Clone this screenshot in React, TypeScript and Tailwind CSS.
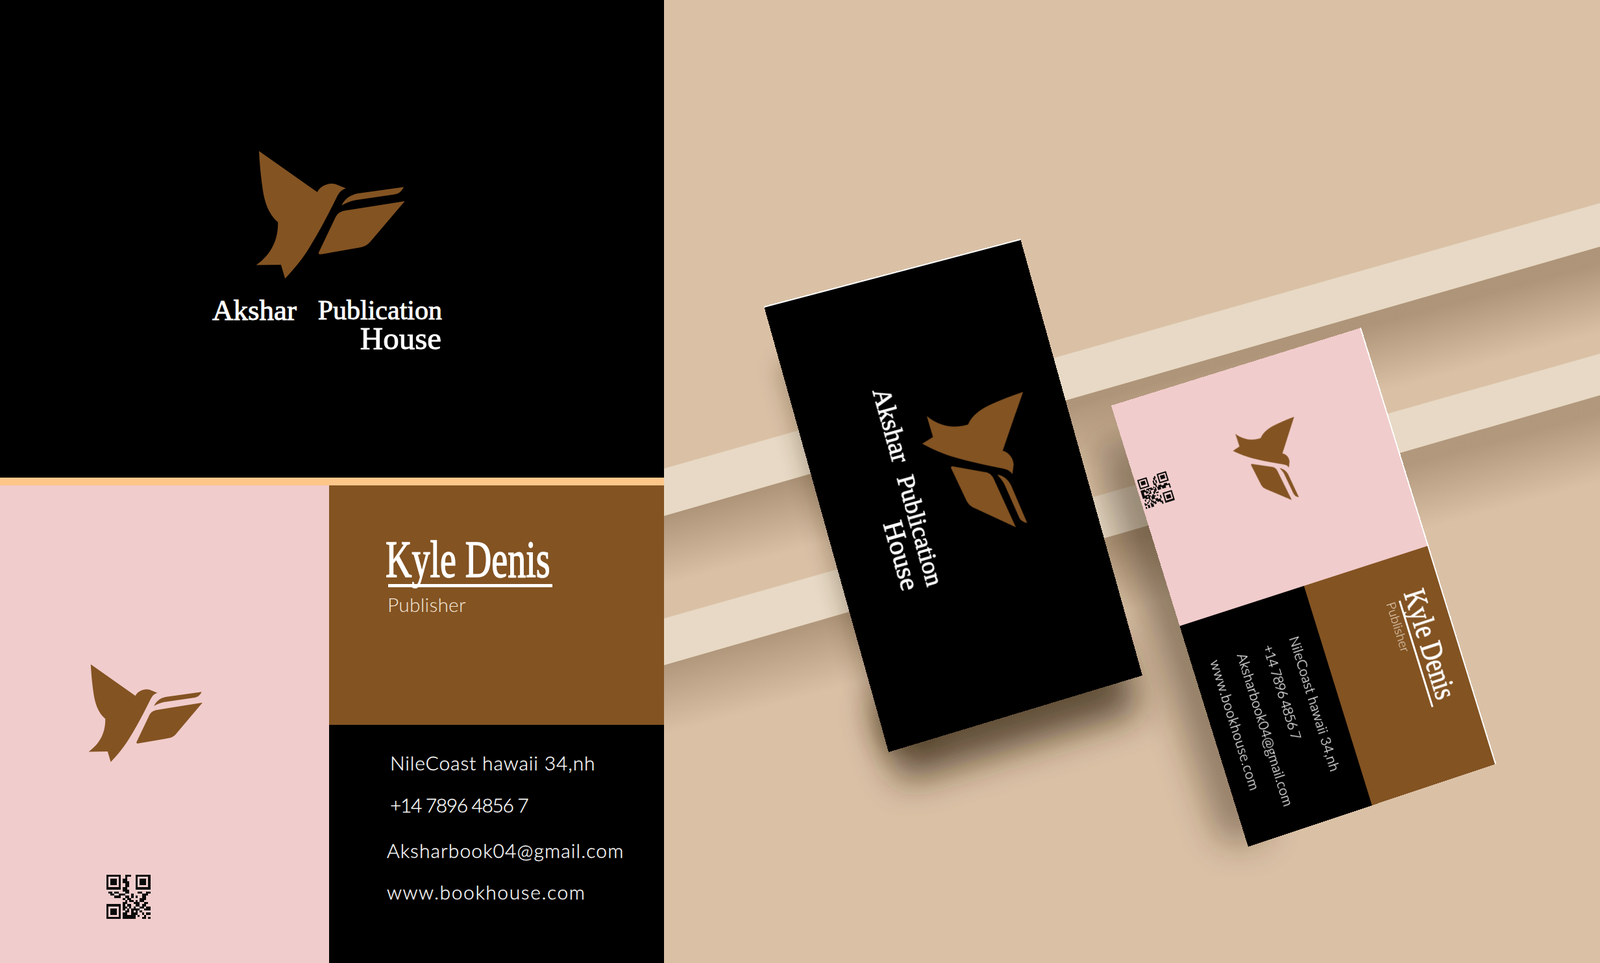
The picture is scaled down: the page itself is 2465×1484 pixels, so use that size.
import React from 'react';

type Pt = [number, number];

const SERIF = "font-['Liberation_Serif',serif]";
const LIGHT = "font-['Lato',sans-serif]";

const QR_ROWS = [
  '111111100111001111111',
  '100000100100001000001',
  '101110101100001011101',
  '101110101110001011101',
  '101110100110001011101',
  '100000100110001000001',
  '111111101100001111111',
  '000000001110000000000',
  '011011000110000110011',
  '001100111000100001110',
  '000011100110101001100',
  '000000001011000011100',
  '000000000101101011000',
  '000000001100011100110',
  '111111101011001101100',
  '100000101101010011011',
  '101110101010111100111',
  '101110100110101010000',
  '101110101100111001011',
  '100000101111110100100',
  '111111101111110001101',
];

// corners are flat (0,0), (w,0), (w,h), (0,h) as they land on the mockup
function quadMatrix(w: number, h: number, q: Pt[]) {
  const [[x0, y0], [x1, y1], [x2, y2], [x3, y3]] = q;
  const dx1 = x1 - x2;
  const dx2 = x3 - x2;
  const sx = x0 - x1 + x2 - x3;
  const dy1 = y1 - y2;
  const dy2 = y3 - y2;
  const sy = y0 - y1 + y2 - y3;
  const den = dx1 * dy2 - dx2 * dy1;
  const g = (sx * dy2 - dx2 * sy) / den;
  const k = (dx1 * sy - sx * dy1) / den;
  const a = x1 - x0 + g * x1;
  const b = x3 - x0 + k * x3;
  const d = y1 - y0 + g * y1;
  const e = y3 - y0 + k * y3;
  return `matrix3d(${a / w},${d / w},0,${g / w},${b / h},${e / h},0,${k / h},0,0,1,0,${x0},${y0},0,1)`;
}

const panel = (q: Pt[]): Pt[] => q.map(([x, y]) => [x - 1023, y]);

const BLACK_QUAD = panel([[1572, 368], [1760, 1041], [1369, 1159], [1177, 472]]);
const PINK_QUAD = panel([[2097, 505], [2305, 1177], [1923, 1305], [1712, 625]]);

function BirdLogo({ className }: { className: string }) {
  return (
    <svg viewBox="340 93 695 595" className={className} fill="#835322">
      <path d="M355 95 L625 285 C640 255 680 240 710 248 L758 268 C735 275 725 290 715 310 C680 380 640 460 590 540 C560 590 520 640 476 686 L457 622 L342 624 C390 590 445 530 443 425 C400 390 380 330 372 270 C362 200 358 150 355 95 Z" />
      <path d="M738 347 C750 320 775 298 815 291 L1026 262 C1015 285 1000 293 985 296 L800 323 C775 328 755 338 738 347 Z" />
      <path d="M632 565 L706 410 C715 390 725 378 750 372 L1031 327 L880 505 C865 525 850 537 825 542 L645 573 C635 575 630 572 632 565 Z" />
    </svg>
  );
}

function QrCode({ className }: { className: string }) {
  return (
    <svg viewBox="0 0 21 21" className={className} shapeRendering="crispEdges" fill="#0a0a0a">
      {QR_ROWS.map((row, y) =>
        row.split('').map((c, x) => (c === '1' ? <rect key={`${x}-${y}`} x={x} y={y} width={1} height={1} /> : null)),
      )}
    </svg>
  );
}

function Backdrop() {
  return (
    <svg viewBox="0 0 1442 1484" className="absolute inset-0 h-full w-full">
      <defs>
        <linearGradient id="under1" gradientUnits="userSpaceOnUse" x1="0" y1="795" x2="27" y2="895">
          <stop offset="0" stopColor="#9c8266" stopOpacity="0.7" />
          <stop offset="1" stopColor="#9c8266" stopOpacity="0" />
        </linearGradient>
        <linearGradient id="under2" gradientUnits="userSpaceOnUse" x1="0" y1="1025" x2="27" y2="1125">
          <stop offset="0" stopColor="#9c8266" stopOpacity="0.65" />
          <stop offset="1" stopColor="#9c8266" stopOpacity="0" />
        </linearGradient>
        <filter id="soft" x="-40%" y="-40%" width="180%" height="180%">
          <feGaussianBlur stdDeviation="28" />
        </filter>
        <filter id="softer" x="-40%" y="-40%" width="180%" height="180%">
          <feGaussianBlur stdDeviation="18" />
        </filter>
      </defs>
      <polygon points="0,795 1442,380 1442,540 0,955" fill="url(#under1)" />
      <polygon points="0,1025 1442,609 1442,770 0,1186" fill="url(#under2)" />
      <polygon points="0,722 1442,313 1442,380 0,795" fill="#e7d9c5" />
      <polygon points="0,953 1442,545 1442,609 0,1025" fill="#e7d9c5" />
      <polygon points="365,1205 735,1095 700,990 320,1080" fill="#33210f" opacity="0.72" filter="url(#soft)" />
      <polygon points="175,560 300,520 420,1140 340,1160" fill="#33210f" opacity="0.32" filter="url(#softer)" />
      <polygon points="660,690 760,660 930,1290 860,1300" fill="#33210f" opacity="0.45" filter="url(#soft)" />
    </svg>
  );
}

function TiltedBlackCard() {
  return (
    <div
      className="absolute left-0 top-0 flex h-[408px] w-[698px] origin-top-left flex-col border-l-2 border-white bg-black pl-[164px] pt-[60px]"
      style={{ transform: quadMatrix(698, 408, BLACK_QUAD) }}
    >
      <BirdLogo className="ml-[58px] h-[173px] w-[202px]" />
      <div className={`${SERIF} mt-[19px] w-[310px] font-normal leading-[38px] text-white [-webkit-text-stroke:0.8px_white]`}>
        <div className="flex justify-between">
          <span className="text-[40px]">Akshar</span>
          <span className="text-[38px]">Publication</span>
        </div>
        <div className="pr-[4px] text-right text-[42px]">House</div>
      </div>
    </div>
  );
}

function TiltedPinkCard() {
  return (
    <div
      className="absolute left-0 top-0 flex h-[403px] w-[703px] origin-top-left border-t-2 border-white"
      style={{ transform: quadMatrix(703, 403, PINK_QUAD) }}
    >
      <div className="flex w-[351px] flex-col bg-[#f1cccc] pl-[97px] pt-[138px]">
        <BirdLogo className="h-[106px] w-[124px]" />
        <QrCode className="ml-[22px] mt-[107px] h-[46px] w-[47px]" />
      </div>
      <div className="flex flex-1 flex-col">
        <div className="h-[201px] bg-[#835322] pl-[58px] pt-[20px] text-white">
          <div className={`${SERIF} h-[42px] origin-left scale-x-[0.8] whitespace-nowrap text-[48px] font-normal leading-[42px] [-webkit-text-stroke:0.9px_white]`}>
            Kyle Denis
          </div>
          <div className="ml-[9px] mt-[3px] h-[3px] w-[171px] bg-white" />
          <div className={`${LIGHT} ml-[7px] mt-[1px] text-[20px] font-light leading-[22px] text-[#f2e3d0]`}>Publisher</div>
        </div>
        <div className={`${LIGHT} flex flex-1 flex-col gap-[21px] bg-black pl-[69px] pt-[27px] text-[21px] font-light leading-[21px] text-white [-webkit-text-stroke:0.2px_white]`}>
          <div className="tracking-[0.3px]">NileCoast hawaii 34,nh</div>
          <div className="tracking-[-0.9px]">+14 7896 4856 7</div>
          <div className="tracking-[0.2px]">Aksharbook04@gmail.com</div>
          <div className="-ml-[3px] tracking-[0.7px]">www.bookhouse.com</div>
        </div>
      </div>
    </div>
  );
}

export default function App() {
  return (
    <div className="flex h-[1484px] w-[2465px] overflow-hidden bg-[#dac1a6]">
      <div className="flex w-[1023px] flex-col">
        <div className="h-[736px] bg-black pl-[327px] pt-[232px] text-white">
          <BirdLogo className="ml-[67px] h-[198px] w-[231px]" />
          <div className={`${SERIF} mt-[25px] w-[354px] font-normal [-webkit-text-stroke:0.9px_white]`}>
            <div className="flex justify-between leading-[46px]">
              <span className="text-[45px]">Akshar</span>
              <span className="text-[42px]">Publication</span>
            </div>
            <div className="pr-[1px] text-right text-[49px] leading-[42px]">House</div>
          </div>
        </div>
        <div className="h-[12px] bg-[#ffc68a]" />
        <div className="flex flex-1">
          <div className="flex w-[507px] flex-col bg-[#f1cccc] pl-[136px] pt-[275px]">
            <BirdLogo className="h-[152px] w-[177px]" />
            <QrCode className="ml-[27px] mt-[173px] h-[68px] w-[69px]" />
          </div>
          <div className="flex flex-1 flex-col">
            <div className="h-[369px] bg-[#835322] pl-[87px] pt-[76px] text-white">
              <div className={`${SERIF} h-[76px] origin-left scale-x-[0.7] whitespace-nowrap text-[80px] font-normal leading-[76px] [-webkit-text-stroke:1.6px_white]`}>
                Kyle Denis
              </div>
              <div className="ml-[4px] h-[5px] w-[253px] bg-white" />
              <div className={`${LIGHT} ml-[3px] mt-[8px] text-[30px] font-light leading-[36px] tracking-[0.2px] text-[#f5e9da]`}>Publisher</div>
            </div>
            <div className={`${LIGHT} flex flex-1 flex-col bg-black pl-[89px] pt-[40px] text-[30px] font-light leading-[36px] text-white [-webkit-text-stroke:0.3px_white]`}>
              <div className="ml-[5px] tracking-[0.85px]">NileCoast hawaii 34,nh</div>
              <div className="ml-[5px] mt-[29px] tracking-[-1.4px]">+14 7896 4856 7</div>
              <div className="mt-[34px] tracking-[1.1px]">Aksharbook04@gmail.com</div>
              <div className="mt-[28px] tracking-[1.6px]">www.bookhouse.com</div>
            </div>
          </div>
        </div>
      </div>
      <div className="relative flex-1 overflow-hidden">
        <Backdrop />
        <TiltedBlackCard />
        <TiltedPinkCard />
      </div>
    </div>
  );
}
